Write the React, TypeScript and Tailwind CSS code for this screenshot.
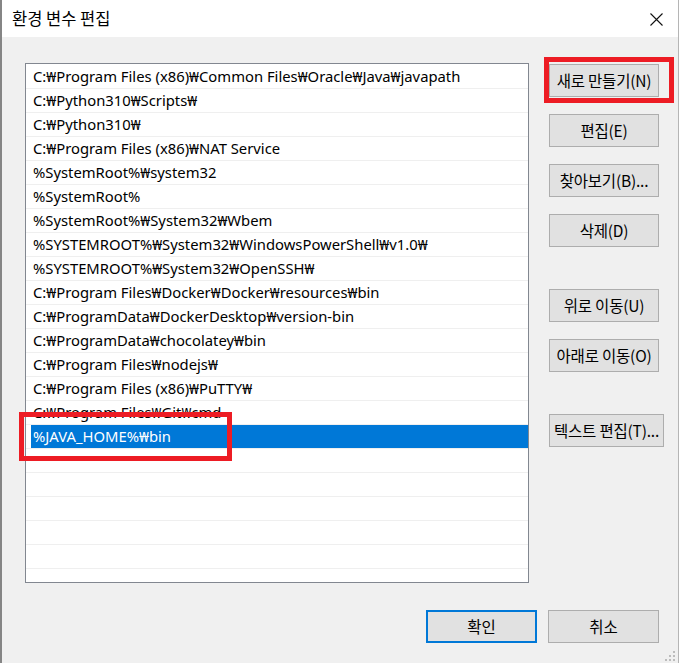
const paths = [
  'C:₩Program Files (x86)₩Common Files₩Oracle₩Java₩javapath',
  'C:₩Python310₩Scripts₩',
  'C:₩Python310₩',
  'C:₩Program Files (x86)₩NAT Service',
  '%SystemRoot%₩system32',
  '%SystemRoot%',
  '%SystemRoot%₩System32₩Wbem',
  '%SYSTEMROOT%₩System32₩WindowsPowerShell₩v1.0₩',
  '%SYSTEMROOT%₩System32₩OpenSSH₩',
  'C:₩Program Files₩Docker₩Docker₩resources₩bin',
  'C:₩ProgramData₩DockerDesktop₩version-bin',
  'C:₩ProgramData₩chocolatey₩bin',
  'C:₩Program Files₩nodejs₩',
  'C:₩Program Files (x86)₩PuTTY₩',
  'C:₩Program Files₩Git₩cmd',
  '%JAVA_HOME%₩bin',
];

const selected = 15;
const emptyRows = 6;

const sideButtons = [
  { label: '새로 만들기(N)', gap: 'mt-[1px]', marked: true },
  { label: '편집(E)', gap: 'mt-[17px]' },
  { label: '찾아보기(B)...', gap: 'mt-[17px]' },
  { label: '삭제(D)', gap: 'mt-[17px]' },
  { label: '위로 이동(U)', gap: 'mt-[42px]' },
  { label: '아래로 이동(O)', gap: 'mt-[17px]' },
  { label: '텍스트 편집(T)...', gap: 'mt-[42px]', wide: true },
];

const uiFont = "font-['Noto_Sans_CJK_KR',sans-serif]";

export default function App() {
  return (
    <div className="flex h-[663px] w-[679px] flex-col border-l-2 border-r border-l-[#858585] border-r-[#b5b5b5] bg-[#f0f0f0] text-black">
      {/* title bar */}
      <div className="flex h-[37px] shrink-0 items-center justify-between bg-white pl-[10px] pr-[15px]">
        <span className={`${uiFont} text-[16.5px] leading-none`}>환경 변수 편집</span>
        <svg width="13" height="13" viewBox="0 0 13 13" className="mt-[1px]">
          <path d="M0.5 0.5 L12.5 12.5 M12.5 0.5 L0.5 12.5" stroke="#111" strokeWidth="1.1" />
        </svg>
      </div>

      <div className="relative flex flex-1 flex-col">
        <div className="relative flex pl-[23px] pt-[26px]">
          {/* path list */}
          <div className="h-[520px] w-[504px] overflow-hidden border border-[#828790] bg-white pt-[1px] font-['Noto_Sans','Noto_Sans_CJK_KR',sans-serif] text-[14.8px]">
            {paths.map((p, i) => (
              <div key={i} className="h-[24px] border-b border-[#efefef]">
                {i === selected ? (
                  <div className="ml-[5px] flex h-[23px] items-center bg-[#0078d7] pl-[2px] text-white">{p}</div>
                ) : (
                  <div className="flex h-[23px] items-center pl-[7px]">{p}</div>
                )}
              </div>
            ))}
            {Array.from({ length: emptyRows }).map((_, i) => (
              <div key={'e' + i} className="h-[24px] border-b border-[#efefef]" />
            ))}
          </div>

          {/* right buttons */}
          <div className="ml-[20px] flex flex-col">
            {sideButtons.map((b) => (
              <div key={b.label} className={`relative ${b.gap}`}>
                <button
                  className={`${uiFont} flex h-[33px] items-center justify-center border border-[#adadad] bg-[#e1e1e1] text-[15.5px] tracking-[-0.2px] ${b.wide ? 'w-[115px]' : 'w-[110px]'}`}
                >
                  {b.label}
                </button>
                {b.marked && (
                  <span className="pointer-events-none absolute -left-[5px] -right-[10px] -top-[7px] -bottom-[6px] border-[5px] border-[#ed1c24]" />
                )}
              </div>
            ))}
          </div>

          {/* highlight around the selected path */}
          <span className="pointer-events-none absolute left-[17px] top-[375px] h-[49px] w-[213px] border-[5px] border-[#ed1c24]" />
        </div>

        {/* OK / Cancel */}
        <div className="mt-[27px] flex justify-end gap-[11px] pr-[19px]">
          <button className={`${uiFont} flex h-[33px] w-[111px] items-center justify-center border-2 border-[#0078d7] bg-[#e1e1e1] text-[15.5px]`}>
            확인
          </button>
          <button className={`${uiFont} flex h-[33px] w-[111px] items-center justify-center border border-[#adadad] bg-[#e1e1e1] text-[15.5px]`}>
            취소
          </button>
        </div>

        {/* size grip */}
        <svg width="12" height="12" viewBox="0 0 12 12" className="absolute bottom-[1px] right-[2px]">
          <rect x="9" y="1" width="2" height="2" fill="#bcbcbc" />
          <rect x="5" y="5" width="2" height="2" fill="#bcbcbc" />
          <rect x="9" y="5" width="2" height="2" fill="#bcbcbc" />
          <rect x="1" y="9" width="2" height="2" fill="#bcbcbc" />
          <rect x="5" y="9" width="2" height="2" fill="#bcbcbc" />
          <rect x="9" y="9" width="2" height="2" fill="#bcbcbc" />
        </svg>
      </div>
    </div>
  );
}
